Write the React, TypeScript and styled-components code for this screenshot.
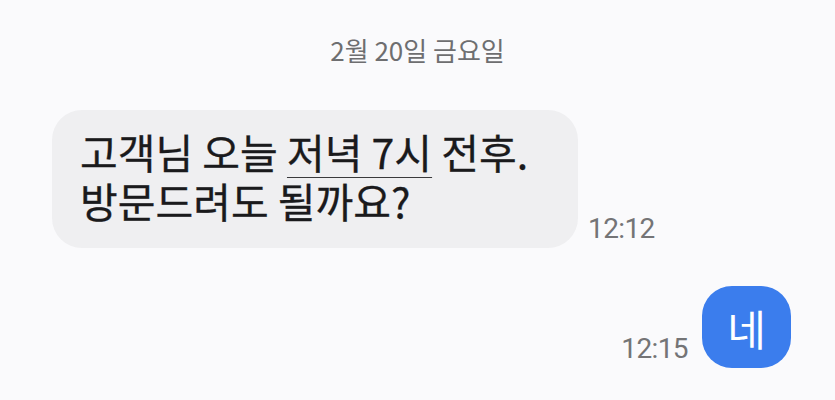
import React from 'react';
import styled, { createGlobalStyle } from 'styled-components';

const GlobalStyle = createGlobalStyle`
  html, body {
    margin: 0;
    padding: 0;
    background: #fafafc;
  }
  body {
    font-family: 'Noto Sans CJK KR', 'Noto Sans', sans-serif;
    -webkit-font-smoothing: antialiased;
  }
`;

export default function App() {
  return (
    <Screen>
      <GlobalStyle />
      <DateLabel>2월 20일 금요일</DateLabel>

      <Row>
        <InBubble>
          <Line>
            고객님 오늘 <Linked>저녁 7시</Linked> 전후.
          </Line>
          <Line>방문드려도 될까요?</Line>
        </InBubble>
        <Time>12:12</Time>
      </Row>

      <Row $mine>
        <Time>12:15</Time>
        <OutBubble>네</OutBubble>
      </Row>
    </Screen>
  );
}

const Screen = styled.main`
  width: 835px;
  height: 400px;
  box-sizing: border-box;
  display: flex;
  flex-direction: column;
  padding: 34px 44px 0 52px;
  overflow: hidden;
`;

const DateLabel = styled.div`
  align-self: center;
  margin-left: -8px;
  font-size: 26px;
  line-height: 32px;
  color: #6e6e70;
`;

const Row = styled.div<{ $mine?: boolean }>`
  display: flex;
  align-items: flex-end;
  justify-content: ${(p) => (p.$mine ? 'flex-end' : 'flex-start')};
  gap: ${(p) => (p.$mine ? '14px' : '10px')};
  margin-top: ${(p) => (p.$mine ? '38px' : '44px')};
`;

const InBubble = styled.div`
  width: 526px;
  height: 138px;
  box-sizing: border-box;
  display: flex;
  flex-direction: column;
  background: #efeff1;
  color: #1a1a1c;
  border-radius: 30px;
  padding: 17px 20px 21px 28px;
  font-size: 41px;
  letter-spacing: 0px;
  -webkit-text-stroke: 0.3px #1a1a1c;
`;

const Line = styled.div`
  height: 49px;
  line-height: 49px;
  white-space: nowrap;
`;

const Linked = styled.span`
  text-decoration: underline;
  text-decoration-thickness: 1px;
  text-underline-offset: 8px;
  text-decoration-color: #3a3a3c;
`;

const Time = styled.span`
  font-family: 'Roboto', 'Noto Sans', sans-serif;
  font-size: 28px;
  line-height: 30px;
  letter-spacing: -0.6px;
  color: #747476;
  margin-bottom: 4px;
`;

const OutBubble = styled.div`
  width: 89px;
  height: 82px;
  box-sizing: border-box;
  display: flex;
  align-items: center;
  justify-content: center;
  background: #3b7ded;
  color: #ffffff;
  border-radius: 30px;
  font-size: 42px;
`;
